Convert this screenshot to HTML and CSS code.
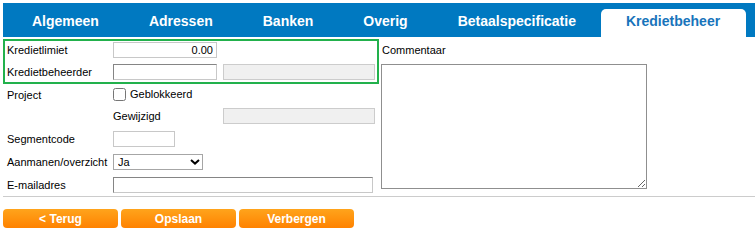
FILE: index.html
```html
<!DOCTYPE html>
<html lang="nl">
<head>
    <meta charset="UTF-8">
    <title>Kredietbeheer</title>
    <link rel="stylesheet" href="styles.css">
</head>
<body>
    <div class="tabs">
        <div class="tab">Algemeen</div>
        <div class="tab">Adressen</div>
        <div class="tab">Banken</div>
        <div class="tab">Overig</div>
        <div class="tab">Betaalspecificatie</div>
        <div class="tab active">Kredietbeheer</div>
    </div>

    <div class="form">
        <div class="col-left">
            <div class="limit-box">
                <div class="row">
                    <label class="label">Kredietlimiet</label>
                    <input class="field num" type="text" value="0.00">
                </div>
                <div class="row">
                    <label class="label">Kredietbeheerder</label>
                    <input class="field inset short" type="text">
                    <input class="field disabled wide" type="text" disabled>
                </div>
            </div>

            <div class="rows">
                <div class="row row-check">
                    <label class="label">Project</label>
                    <input class="check" type="checkbox" id="geblokkeerd">
                    <label for="geblokkeerd" class="check-label">Geblokkeerd</label>
                </div>
                <div class="row">
                    <span class="label"></span>
                    <span class="sublabel">Gewijzigd</span>
                    <input class="field disabled wide" type="text" disabled>
                </div>
                <div class="row">
                    <label class="label">Segmentcode</label>
                    <input class="field segment" type="text">
                </div>
                <div class="row">
                    <label class="label">Aanmanen/overzicht</label>
                    <div class="select-wrap">
                        <select class="select">
                            <option>Ja</option>
                            <option>Nee</option>
                        </select>
                        <svg class="chevron" width="10" height="6" viewBox="0 0 10 6">
                            <path d="M1 1 L5 4.6 L9 1" fill="none" stroke="#000" stroke-width="2"/>
                        </svg>
                    </div>
                </div>
                <div class="row">
                    <label class="label">E-mailadres</label>
                    <input class="field inset email" type="text">
                </div>
            </div>
        </div>

        <div class="col-right">
            <label class="comment-label">Commentaar</label>
            <textarea class="comment"></textarea>
        </div>
    </div>

    <div class="divider"></div>

    <div class="buttons">
        <button class="btn">&lt; Terug</button>
        <button class="btn">Opslaan</button>
        <button class="btn">Verbergen</button>
    </div>
</body>
</html>
```

FILE: styles.css
```css
body {
    margin: 3px 0 0 3px;
    font-family: "Liberation Sans", Arial, sans-serif;
    font-size: 11px;
    color: #000;
    background: #fff;
}

/* tab bar */
.tabs {
    display: flex;
    align-items: flex-end;
    height: 34px;
    padding-left: 4px;
    background-color: #0079c1;
}

.tab {
    height: 28px;
    line-height: 24px;
    padding: 0 25px;
    color: #fff;
    font-size: 14px;
    font-weight: bold;
}

.tab.active {
    background-color: #fff;
    color: #1874bb;
    border-radius: 5px 5px 0 0;
    padding-right: 26px;
}

/* form */
.form {
    display: flex;
    gap: 2px;
    margin-top: 2px;
}

.col-left {
    width: 376px;
}

.limit-box {
    display: flex;
    flex-direction: column;
    gap: 6px;
    padding: 1px 0 2px 2px;
    border: 2px solid #22b14c;
}

.rows {
    display: flex;
    flex-direction: column;
    padding-left: 4px;
}

.row {
    display: flex;
    align-items: center;
    height: 16px;
}

.rows .row {
    margin-top: 7px;
}

.rows .row-check {
    height: 13px;
    margin-top: 4px;
}

.label {
    width: 106px;
    line-height: 16px;
    white-space: nowrap;
}

.sublabel {
    width: 110px;
    line-height: 16px;
}

.field {
    box-sizing: border-box;
    height: 16px;
    margin: 0;
    padding: 0 3px;
    font-family: inherit;
    font-size: 11px;
    border: 1px solid #c8c8c8;
    background: #fff;
    outline: none;
}

.num {
    width: 104px;
    text-align: right;
}

.short {
    width: 104px;
    margin-right: 6px;
}

.inset {
    border-color: #858585 #c8c8c8 #c8c8c8 #858585;
}

.disabled {
    background-color: #f0f0f0;
    border-color: #cccccc;
}

.wide {
    width: 152px;
}

.segment {
    width: 62px;
}

.email {
    width: 260px;
}

.check {
    width: 13px;
    height: 13px;
    margin: 0;
}

.check-label {
    margin-left: 4px;
    line-height: 13px;
}

.select-wrap {
    position: relative;
    width: 90px;
    height: 16px;
}

.select {
    appearance: none;
    box-sizing: border-box;
    width: 90px;
    height: 16px;
    margin: 0;
    padding: 0 0 0 4px;
    font-family: inherit;
    font-size: 11px;
    color: #000;
    background: #fff;
    border: 1px solid #a6a6a6;
    border-radius: 0;
}

.chevron {
    position: absolute;
    right: 3px;
    top: 5px;
    pointer-events: none;
}

.col-right {
    display: flex;
    flex-direction: column;
    padding-top: 3px;
}

.comment-label {
    line-height: 16px;
    padding-left: 1px;
    margin-bottom: 6px;
}

.comment {
    box-sizing: border-box;
    width: 266px;
    height: 125px;
    margin: 0;
    border: 1px solid #8f8f8f;
    font-family: inherit;
    font-size: 11px;
}

.divider {
    height: 1px;
    margin-top: 3px;
    background-color: #cccccc;
}

/* buttons */
.buttons {
    display: flex;
    gap: 3px;
    margin-top: 12px;
}

.btn {
    width: 115px;
    height: 19px;
    padding: 0;
    border: none;
    border-radius: 4px;
    background: linear-gradient(#ffa41c, #ff8200);
    color: #fff;
    font-family: "Liberation Sans", Arial, sans-serif;
    font-size: 12px;
    font-weight: bold;
    cursor: pointer;
}
```
